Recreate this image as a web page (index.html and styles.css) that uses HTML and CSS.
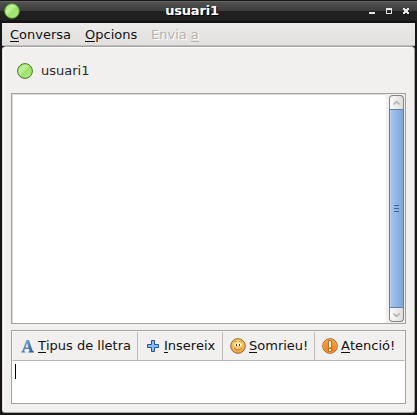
FILE: index.html
```html
<!DOCTYPE html>
<html lang="ca">
<head>
<meta charset="utf-8">
<title>usuari1</title>
<link rel="stylesheet" href="styles.css">
</head>
<body>
<svg class="defs" width="0" height="0">
  <defs>
    <linearGradient id="green" x1="0" y1="0" x2="1" y2="1"><stop offset="0" stop-color="#8fdc58"/><stop offset=".35" stop-color="#c3f39e"/><stop offset=".55" stop-color="#9de26a"/><stop offset="1" stop-color="#b4ee85"/></linearGradient>
    <linearGradient id="letter" x1="0" y1="0" x2="1" y2="1"><stop offset="0" stop-color="#8db4dc"/><stop offset="1" stop-color="#245894"/></linearGradient>
    <linearGradient id="orange" x1="0" y1="0" x2="0" y2="1"><stop offset="0" stop-color="#f6a84b"/><stop offset="1" stop-color="#e8790c"/></linearGradient>
    <radialGradient id="face" cx=".5" cy=".3" r=".7"><stop offset="0" stop-color="#ffe28c"/><stop offset="1" stop-color="#eca33a"/></radialGradient>
  </defs>
</svg>
<div class="window">
  <header class="titlebar">
    <svg class="title-icon" width="16" height="16" viewBox="0 0 16 16"><circle cx="8" cy="8" r="7.3" fill="url(#green)" stroke="#5a9a2c"/></svg>
    <h1 class="title">usuari1</h1>
    <svg class="controls" width="42" height="8" viewBox="0 0 42 8" shape-rendering="crispEdges"><path d="M0 5h6v2H0z" fill="#e5e5e2"/><path fill-rule="evenodd" d="M17 1h6v6h-6zM18 3v3h4V3z" fill="#e5e5e2"/><path d="M34 1h2v1h2V1h2v2h-1v2h1v2h-2V6h-2v1h-2V5h1V3h-1z" fill="#e5e5e2"/></svg>
  </header>
  <nav class="menubar"><span class="m1"><u>C</u>onversa</span><span class="m2"><u>O</u>pcions</span><span class="m3">Envia <u>a</u></span></nav>
  <main class="content">
    <div class="contact">
      <svg width="16" height="16" viewBox="0 0 16 16"><circle cx="8" cy="8" r="7.4" fill="url(#green)" stroke="#44741f"/></svg>
      <span>usuari1</span>
    </div>
    <section class="log">
      <div class="scrollbar">
        <div class="arrow up"><svg width="7" height="4" viewBox="0 0 7 4"><path d="M.5 3.5l3-3 3 3" fill="none" stroke="#aaa8a5" stroke-width="1.3"/></svg></div>
        <div class="thumb"><i></i><i></i><i></i></div>
        <div class="arrow down"><svg width="7" height="4" viewBox="0 0 7 4"><path d="M.5 .5l3 3 3-3" fill="none" stroke="#aaa8a5" stroke-width="1.3"/></svg></div>
      </div>
    </section>
    <section class="composer">
      <div class="toolbar">
        <div class="tool t1"><svg width="13" height="13" viewBox="0 0 13 13"><path fill="url(#letter)" fill-rule="evenodd" d="M5.5 0H8l3.7 11 1.3.6V12.5H7.2v-.8l1.4-.5L8 9H3.9l-.8 2.2 1.4.5v.8H0v-.7l1.4-.7L4.7 2zM6 3L4.4 7.6h3.1z"/></svg><span><u>T</u>ipus de lletra</span></div>
        <div class="tool t2"><svg width="12" height="12" viewBox="0 0 12 12"><path d="M4.5 .5h3v4h4v3h-4v4h-3v-4h-4v-3h4z" fill="#8bbcf2" stroke="#245199"/></svg><span><u>I</u>nsereix</span></div>
        <div class="tool t3"><svg width="16" height="16" viewBox="0 0 16 16"><circle cx="8" cy="8" r="7.3" fill="url(#face)" stroke="#9b642a"/><path d="M4 4.2q1.5-1.6 3-.4M9 3.8q1.5-1.2 3 .4" fill="none" stroke="#c98a35" stroke-width=".9"/><ellipse cx="6" cy="6.8" rx="1.9" ry="1.8" fill="#fff4cf"/><ellipse cx="10" cy="6.8" rx="1.9" ry="1.8" fill="#fff4cf"/><path d="M6 6h1v2H6zM9 6h1v2H9z" fill="#4f3923"/><path d="M4.2 10.2q3.8 3.6 7.6 0" fill="#f7cf74" stroke="#a56a2a" stroke-width=".9"/></svg><span><u>S</u>omrieu!</span></div>
        <div class="tool t4"><svg width="16" height="16" viewBox="0 0 16 16"><circle cx="8" cy="8" r="7.3" fill="url(#orange)" stroke="#a85b1c"/><circle cx="8" cy="8" r="6.4" fill="none" stroke="#f8bd70" stroke-width=".6"/><path d="M6.5 2.5h3v7.4h-3zM6.5 10.5h3v2.8h-3z" fill="#fff3dd" stroke="#b9651d" stroke-width=".9"/></svg><span><u>A</u>tenció!</span></div>
      </div>
      <div class="entry"><span class="caret"></span></div>
    </section>
  </main>
</div>
</body>
</html>
```
FILE: styles.css
```css
* { box-sizing: border-box; }
html, body { margin: 0; height: 100%; overflow: hidden; }
body { background: #171717; font: 13px/16px "DejaVu Sans", sans-serif; color: #111; }
svg { display: block; flex: none; }
.defs { position: absolute; }
u { text-decoration: none; box-shadow: 0 1px 0 #111; display: inline-block; height: 14px; line-height: 16px; }
.window { width: 417px; height: 415px; padding: 0 2px 2px; display: flex; flex-direction: column; background: #151515; }
.titlebar { height: 23px; margin: 0 -2px; padding: 0 6px 1px 4px; display: flex; align-items: center; border-top: 1px solid #171717; border-bottom: 1px solid #131313; background: linear-gradient(#666 0 1px, #505050 1px, #3d3d3d 10px, #202020 10px, #202020 19px, #151515 20px); }
.title { flex: 1; margin: 0 0 0 3px; padding-right: 8px; text-align: center; font-size: 13px; line-height: 16px; letter-spacing: -.2px; color: #fff; text-shadow: 1px 1px 0 #000; }
.menubar { height: 23px; display: flex; padding: 4px 8px 0; border-bottom: 1px solid #bdbbb8; background: linear-gradient(#eceae9, #e2e0de); }
.m1 { width: 75px; }
.m2 { width: 66px; }
.m3 { color: #b5b1ac; text-shadow: 1px 1px 0 #fff; }
.m3 u { box-shadow: 0 1px 0 #b5b1ac; }
.content { flex: 1; display: flex; flex-direction: column; padding: 0 8px 8px; background: #f1f0ee; border: 1px solid #a7a5a2; border-left-color: #dddbd9; border-radius: 4px 4px 3px 3px; box-shadow: inset 0 1px #fff, inset 1px 0 #fff; }
.contact { height: 46px; display: flex; align-items: center; gap: 8px; padding: 2px 0 0 6px; color: #2a2a2a; }
.log { height: 231px; border: 1px solid #a5a29e; box-shadow: inset 1px 1px #dedcda; background: #fff; display: flex; justify-content: flex-end; }
.scrollbar { width: 19px; padding: 1px 1px 1px 3px; background: #f1f0ee; display: flex; flex-direction: column; }
.arrow { height: 14px; display: flex; align-items: center; justify-content: center; border: 1px solid #85827e; background: linear-gradient(90deg, #fafafa, #dfddda); }
.up { border-radius: 4px 4px 0 0; border-bottom: 0; }
.down { border-radius: 0 0 4px 4px; border-top: 0; }
.thumb { flex: 1; border: 1px solid #5a80b3; background: linear-gradient(90deg, #a9c8ec, #7da5d6); box-shadow: inset 1px 0 #b7d0ef; display: flex; flex-direction: column; justify-content: center; align-items: center; gap: 2px; }
.thumb i { width: 5px; height: 1px; background: #416491; }
.composer { height: 74px; margin-top: 6px; border: 1px solid #a5a29e; background: #fff; display: flex; flex-direction: column; }
.toolbar { height: 30px; display: flex; background: #f1f0ee; border: 1px solid #f8f7f6; border-bottom: 1px solid #b8b5b2; }
.tool { display: flex; align-items: center; border-right: 1px solid #bfbcb9; white-space: nowrap; }
.t1 { width: 125px; padding-left: 8px; gap: 4px; }
.t2 { width: 85px; padding-left: 9px; gap: 5px; }
.t3 { width: 92px; padding-left: 7px; gap: 3px; }
.t4 { flex: 1; padding-left: 7px; gap: 3px; border: 0; }
.entry { flex: 1; padding: 3px 0 0 3px; }
.caret { display: block; width: 1px; height: 15px; background: #000; }
```
